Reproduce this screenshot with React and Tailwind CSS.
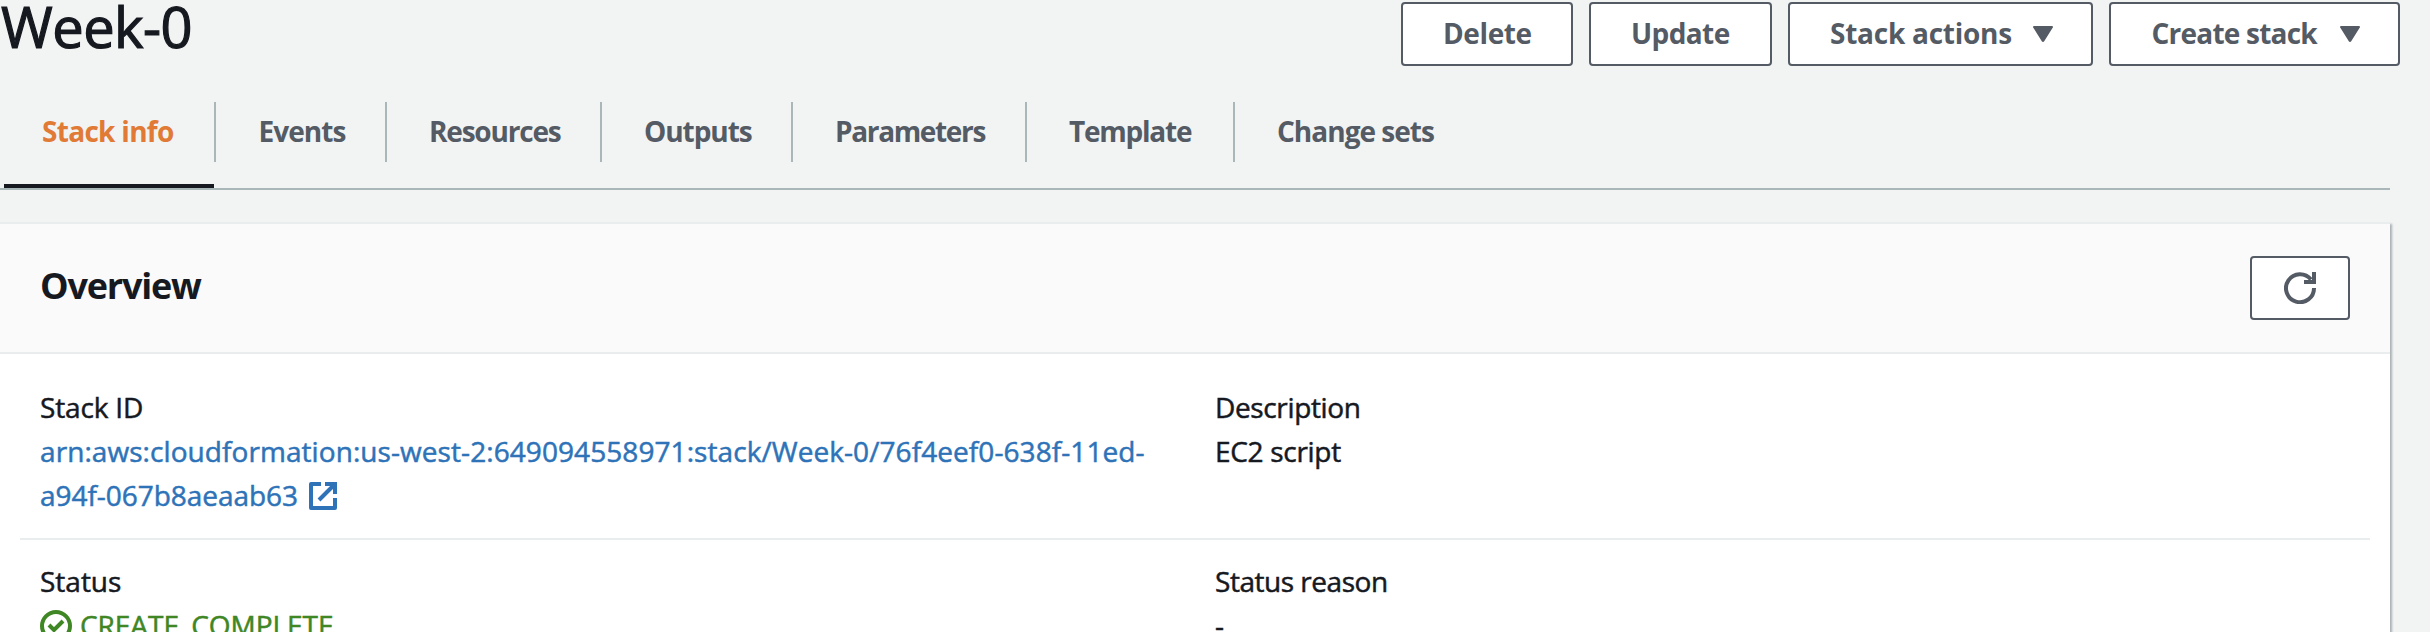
const TABS = [
  { label: "Stack info", active: true, className: "w-[216px] pl-[42px] tracking-[-0.7px]" },
  { label: "Events", className: "w-[171px] pl-[42.5px] tracking-[-0.94px]" },
  { label: "Resources", className: "w-[215px] pl-[42px] tracking-[-1.2px]" },
  { label: "Outputs", className: "w-[191px] pl-[42px] tracking-[-1.05px]" },
  { label: "Parameters", className: "w-[234px] pl-[42px] tracking-[-1.35px]" },
  { label: "Template", className: "w-[208px] pl-[42px] tracking-[-1.23px]" },
  { label: "Change sets", last: true, className: "w-[240px] pl-[42px] tracking-[-0.98px]" },
];

function Tab({ label, active, last, className }) {
  return (
    <li className="flex flex-col justify-between">
      <a
        className={`block h-[60px] whitespace-nowrap pt-[7px] font-bold ${last ? "" : "border-r-2 border-[#aab7b8]"} ${
          active ? "text-[#e07a35]" : "text-[#545b64]"
        } ${className}`}
      >
        {label}
      </a>
      {active && <span className="ml-1 block h-1 w-[210px] bg-[#16191f]" />}
    </li>
  );
}

function Button({ className, caret, children }) {
  return (
    <button
      className={`flex h-16 items-center whitespace-nowrap rounded-[4px] border-2 border-[#545b64] bg-white pb-[2px] font-bold text-[#545b64] ${className}`}
    >
      {children}
      {caret && (
        <svg className="mt-[2px] ml-auto h-4 w-5" viewBox="0 0 20 16" fill="currentColor">
          <path d="M1 0h18a1 1 0 0 1 .8 1.6l-8.600 13.600a1.400 1.400 0 0 1-2.400 0L.2 1.600A1 1 0 0 1 1 0z" />
        </svg>
      )}
    </button>
  );
}

function Field({ label, labelClass, className, children }) {
  return (
    <div className={className}>
      <div className={labelClass}>{label}</div>
      {children}
    </div>
  );
}

export default function App() {
  return (
    <div className="flex h-[632px] w-[2430px] flex-col overflow-hidden bg-[#f2f3f3] font-['Open_Sans','Noto_Sans',sans-serif] text-[28px] leading-[44px] text-[#16191f]">
      <header className="flex h-[102px] shrink-0 items-start justify-between pr-[30px]">
        <h1 className="pl-px text-[56px] leading-[52px] tracking-[-0.5px] [-webkit-text-stroke:1.2px]">Week-0</h1>
        <div className="flex gap-4 pt-[2px]">
          <Button className="w-[172px] pl-[40px] tracking-[-0.38px]">Delete</Button>
          <Button className="w-[183px] pl-[40px] tracking-[-0.6px]">Update</Button>
          <Button caret className="w-[305px] pr-[38px] pl-[40px] tracking-[-0.25px]">Stack actions</Button>
          <Button caret className="w-[291px] pr-[38px] pl-[40.5px] tracking-[-0.78px]">Create stack</Button>
        </div>
      </header>

      <nav className="h-[88px] w-[2390px] shrink-0 border-b-2 border-[#aab7b8]">
        <ul className="flex h-full">
          {TABS.map((tab) => (
            <Tab key={tab.label} {...tab} />
          ))}
        </ul>
      </nav>

      <main className="mt-8 w-[2390px] flex-1 border-t-2 border-[#eaeded] bg-white shadow-[2px_2px_2px_0_rgba(0,28,36,0.3)]">
        <div className="flex h-[130px] items-start justify-between border-b-2 border-[#eaeded] bg-[#fafafa] pr-10 pl-10">
          <h2 className="mt-[37px] text-[36px] leading-[50px] font-bold tracking-[-1.2px]">Overview</h2>
          <button className="mt-8 flex h-16 w-[100px] items-center justify-center rounded-[4px] border-2 border-[#545b64] bg-white">
            <svg className="size-8" viewBox="0 0 32 32" fill="none" stroke="#545b64" strokeWidth="4">
              <path d="M30 16A14 14 0 1 1 27 7.500" />
              <path d="M30 0V10H20" />
            </svg>
          </button>
        </div>

        <div className="mx-5 flex h-[186px] border-b-2 border-[#eaeded] pt-[31px] [-webkit-text-stroke:0.5px]">
          <Field label="Stack ID" labelClass="tracking-[-0.16px]" className="w-[1195px] pl-5">
            <a className="block text-[#2e73b8]">
              <span className="block tracking-[0.07px] whitespace-nowrap">
                arn:aws:cloudformation:us-west-2:649094558971:stack/Week-0/76f4eef0-638f-11ed-
              </span>
              <span className="flex tracking-[-0.04px]">
                a94f-067b8aeaab63
                <svg className="mt-[9px] ml-[11px] size-7" viewBox="0 0 28 28" fill="none" stroke="currentColor" strokeWidth="4">
                  <path d="M12 2H2V26H26V16" strokeLinejoin="round" />
                  <path d="M16 2H26V12M26 2L10 18" />
                </svg>
              </span>
            </a>
          </Field>
          <Field label="Description" labelClass="tracking-[-0.36px]">
            <div className="tracking-[-0.3px]">EC2 script</div>
          </Field>
        </div>

        <div className="mx-5 flex pt-[19px] [-webkit-text-stroke:0.5px]">
          <Field label="Status" className="w-[1195px] pl-5">
            <div className="flex tracking-[-0.04px] text-[#3f8624]">
              <svg className="mt-[7px] mr-2 size-8" viewBox="0 0 32 32" fill="none" stroke="currentColor" strokeWidth="4">
                <circle cx="16" cy="16" r="14" />
                <path d="M9 15L14 20L23 11" />
              </svg>
              CREATE_COMPLETE
            </div>
          </Field>
          <Field label="Status reason" labelClass="tracking-[-0.47px]">
            <div>-</div>
          </Field>
        </div>
      </main>
    </div>
  );
}
